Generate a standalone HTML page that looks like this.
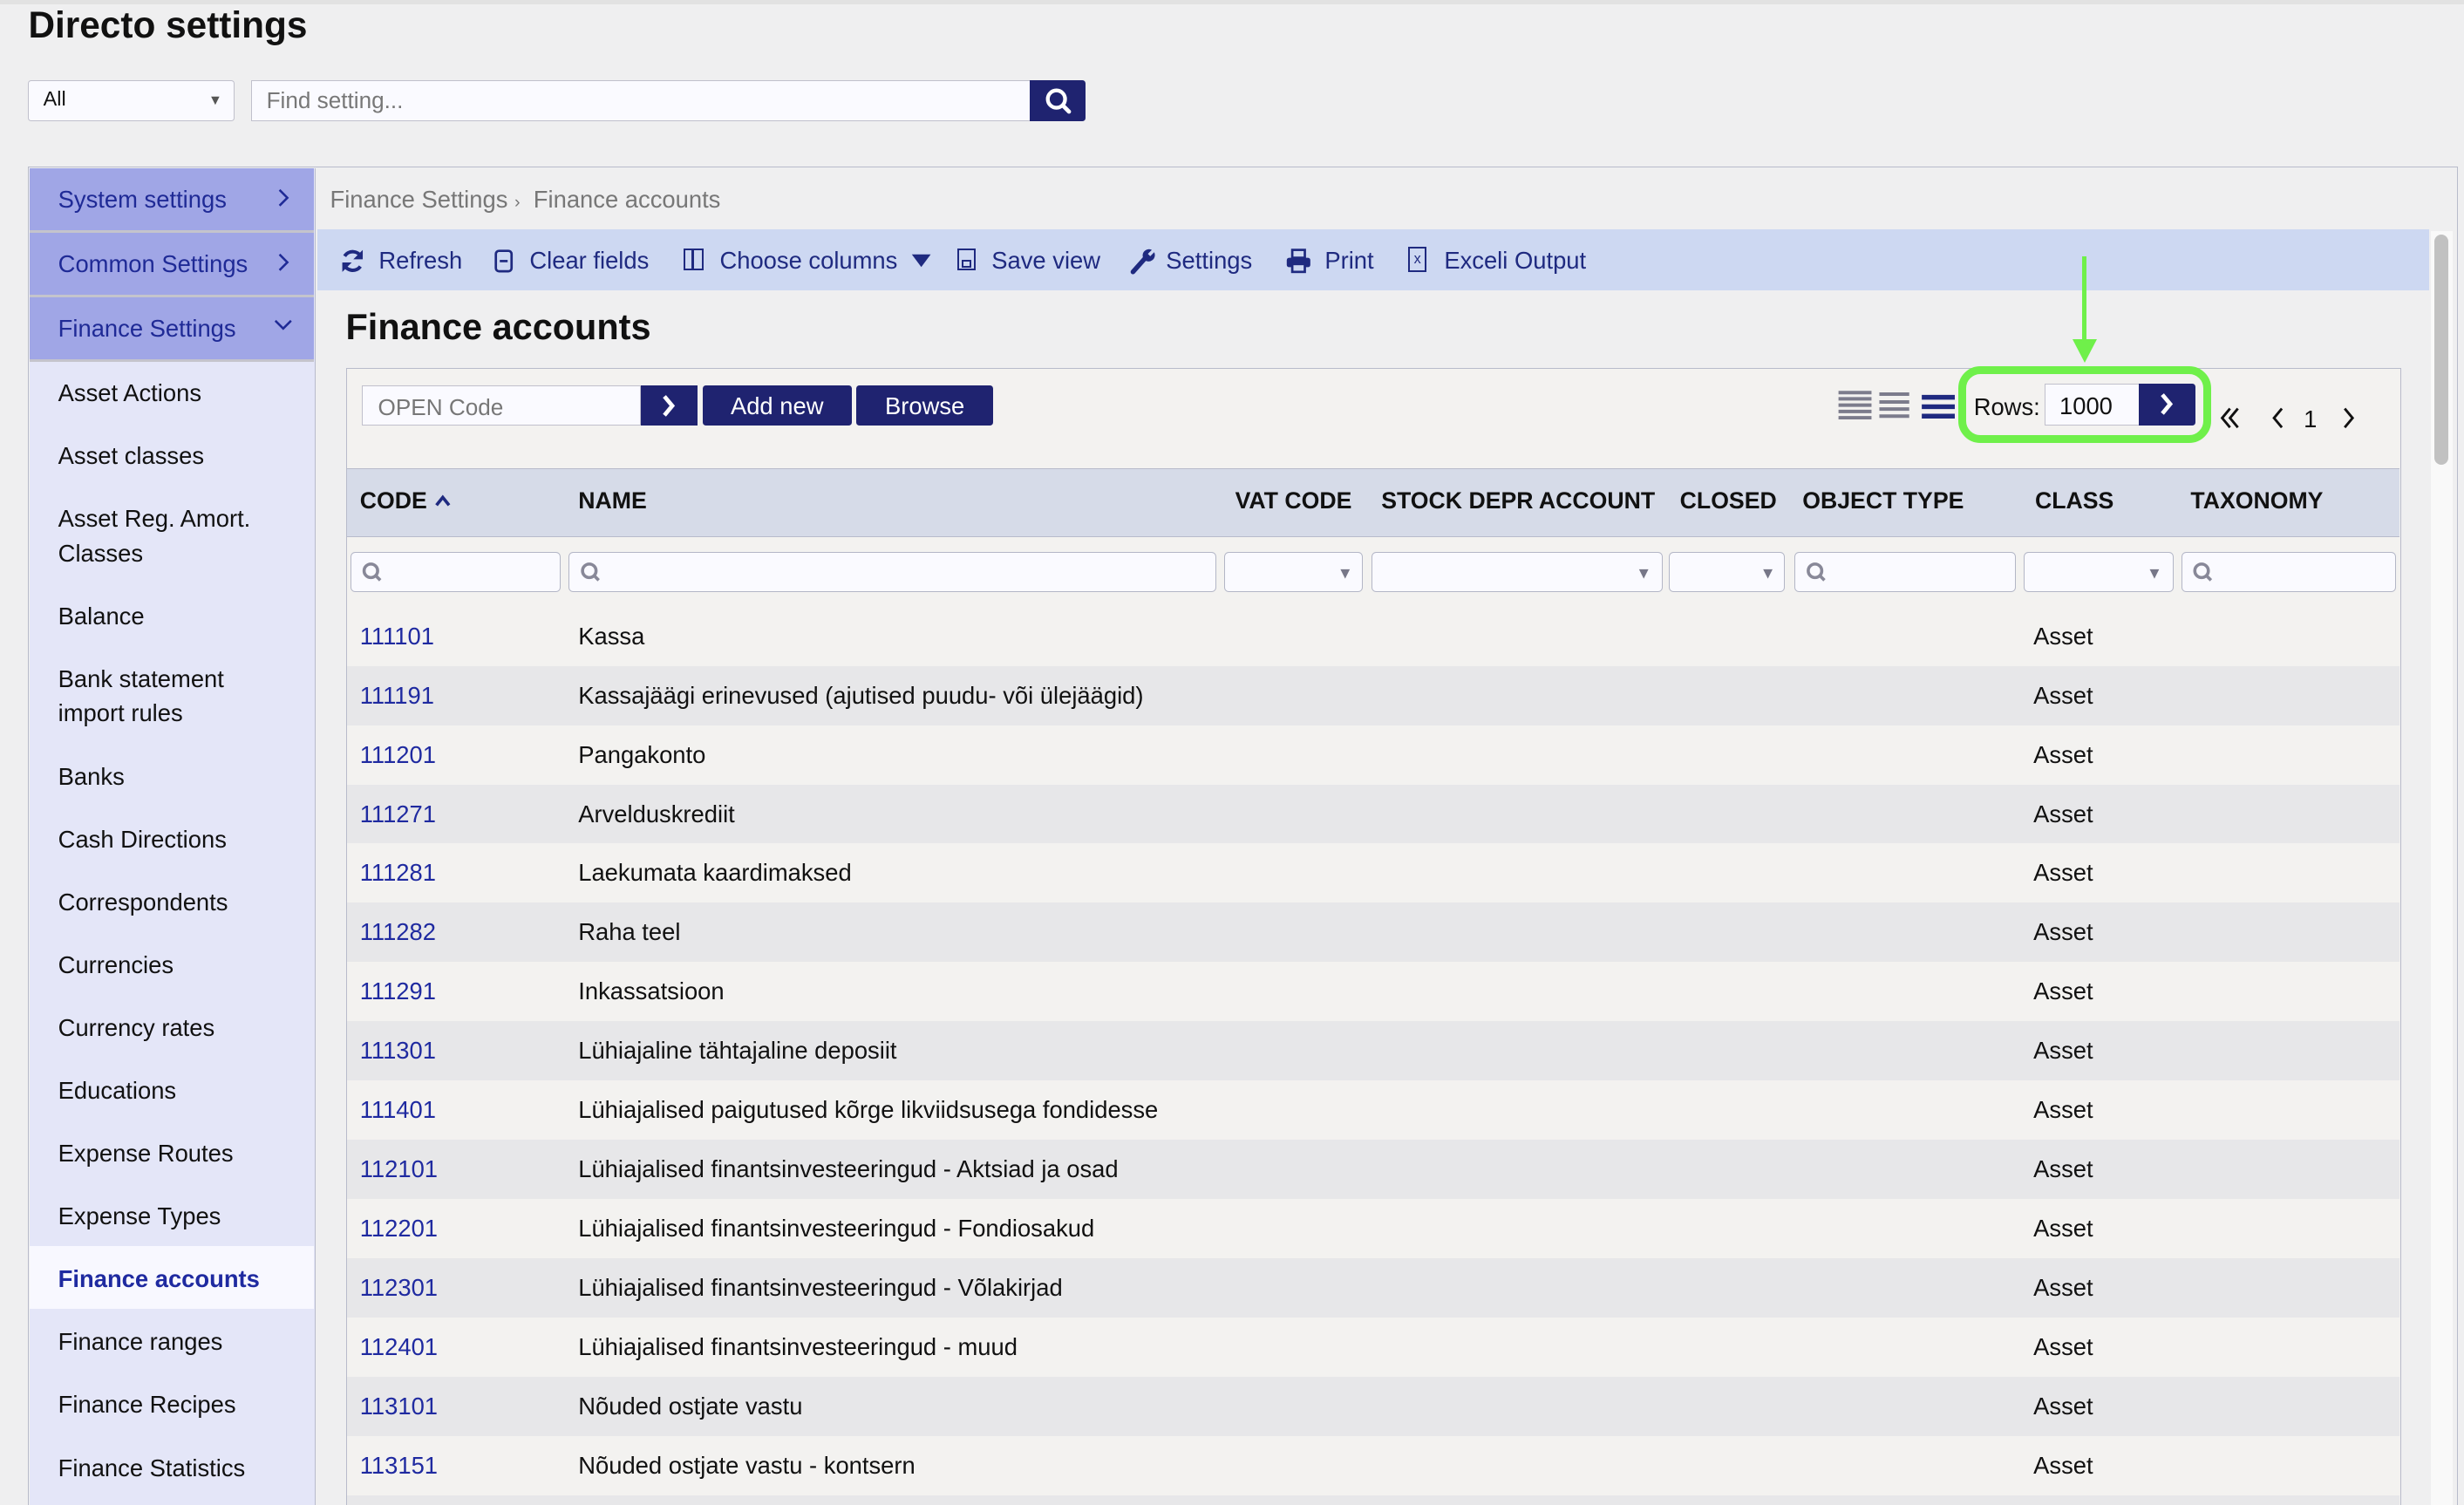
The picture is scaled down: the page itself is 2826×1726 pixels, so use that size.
<!DOCTYPE html>
<html><head><meta charset="utf-8"><style>
*{box-sizing:border-box;margin:0;padding:0}
html,body{width:2826px;height:1726px;overflow:hidden;background:#efeff0}
#w{zoom:1.80230;position:relative;width:1568px;height:958px;font-family:"Liberation Sans",sans-serif;font-size:15.2px;color:#111}
.a{position:absolute}
.nav{position:absolute;left:19px;width:181px;background:#a0a6e6;color:#1f2a96;border-bottom:2px solid #c4c4cc;padding-left:18px;height:41px;line-height:40px}
.nav svg{position:absolute;right:16px;top:13px}
.sub{position:absolute;left:19px;width:181px;color:#111;padding-left:18px;line-height:22px}
.tb{position:absolute;top:157px;color:#1f2a80}
.th{position:absolute;top:310px;font-weight:bold;font-size:14.8px}
.f{position:absolute;top:351px;height:26px;border:1px solid #b3b6c6;border-radius:3px;background:#fafaff}
.row{position:absolute;left:221px;width:1306px;height:37.7px}
.row .c{position:absolute;left:8px;top:10px;color:#1f2aa0}
.row .n{position:absolute;left:147px;top:10px}
.row .k{position:absolute;left:1073px;top:10px}
</style></head><body><div id="w">
<div class="a" style="left:0;top:0;width:1568px;height:3px;background:#e2e2e2"></div>
<div class="a" style="left:18px;top:3px;font-size:23.5px;font-weight:bold">Directo settings</div>
<div class="a" style="left:18px;top:51px;width:131px;height:26px;background:#fafaff;border:1px solid #c0c0cc;border-radius:2px;padding:4px 9px;font-size:13px">All<span style="position:absolute;right:7px;top:7px;font-size:9px;color:#555">▼</span></div>
<div class="a" style="left:160px;top:51px;width:496px;height:26px;background:#fafaff;border:1px solid #c0c0cc;padding:4px 9px;color:#777;font-size:14.5px">Find setting...</div>
<div class="a" style="left:655px;top:51px;width:36px;height:26px;background:#1f2370;border-radius:0 2px 2px 0"><svg width="36" height="26"><circle cx="17" cy="12" r="5.5" stroke="#fff" stroke-width="2.4" fill="none"/><path d="M21 16l4 4" stroke="#fff" stroke-width="2.6" stroke-linecap="round"/></svg></div>

<div class="a" style="left:18px;top:106px;width:1546px;height:860px;border:1px solid #b8bbcb;background:#efeff0"></div>
<div class="a" style="left:19px;top:107px;width:182px;height:860px;background:#e4e6f8;border-right:1px solid #b8bbcb"></div>
<div class="nav" style="top:107px">System settings<svg width="8" height="12"><path d="M2 1l5 5-5 5" stroke="#1f2a96" stroke-width="1.4" fill="none"/></svg></div>
<div class="nav" style="top:148px">Common Settings<svg width="8" height="12"><path d="M2 1l5 5-5 5" stroke="#1f2a96" stroke-width="1.4" fill="none"/></svg></div>
<div class="nav" style="top:189px">Finance Settings<svg width="12" height="8" style="right:14px;top:14px"><path d="M1 1l5 5 5-5" stroke="#1f2a96" stroke-width="1.4" fill="none"/></svg></div>
<div class="sub" style="top:239px">Asset Actions</div>
<div class="sub" style="top:279px">Asset classes</div>
<div class="sub" style="top:319px">Asset Reg. Amort.<br>Classes</div>
<div class="sub" style="top:381px">Balance</div>
<div class="sub" style="top:421px">Bank statement<br>import rules</div>
<div class="sub" style="top:483px">Banks</div>
<div class="sub" style="top:523px">Cash Directions</div>
<div class="sub" style="top:563px">Correspondents</div>
<div class="sub" style="top:603px">Currencies</div>
<div class="sub" style="top:643px">Currency rates</div>
<div class="sub" style="top:683px">Educations</div>
<div class="sub" style="top:723px">Expense Routes</div>
<div class="sub" style="top:763px">Expense Types</div>
<div class="a" style="left:19px;top:793px;width:181px;height:40px;background:#f8f8ff"></div>
<div class="sub" style="top:803px;color:#1f2aa0;font-weight:bold">Finance accounts</div>
<div class="sub" style="top:843px">Finance ranges</div>
<div class="sub" style="top:883px">Finance Recipes</div>
<div class="sub" style="top:923px">Finance Statistics</div>

<div class="a" style="left:210px;top:118px;color:#777">Finance Settings <span style="font-size:11px">›</span>&nbsp; Finance accounts</div>
<div class="a" style="left:202px;top:146px;width:1344px;height:39px;background:#cdd8f2"></div>
<svg class="a" style="left:216px;top:157px" width="18" height="18"><g stroke="#1f2a80" stroke-width="2.2" fill="none"><path d="M14 6.5A6 6 0 0 0 3.5 6"/><path d="M3 11a6 6 0 0 0 10.5 1.5"/></g><path d="M15 2v6h-6z" fill="#1f2a80"/><path d="M2 16v-6h6z" fill="#1f2a80"/></svg>
<div class="tb" style="left:241px">Refresh</div>
<svg class="a" style="left:314px;top:158px" width="14" height="16"><rect x="1.5" y="1.5" width="10" height="13" rx="2" stroke="#1f2a80" stroke-width="1.5" fill="none"/><path d="M4 8h5" stroke="#1f2a80" stroke-width="1.5"/></svg>
<div class="tb" style="left:337px">Clear fields</div>
<div class="a" style="left:435px;top:158px;width:13px;height:14px;border:1.5px solid #1f2a80"><div style="position:absolute;left:4px;top:0;width:1.5px;height:12px;background:#1f2a80"></div></div>
<div class="tb" style="left:458px">Choose columns</div>
<svg class="a" style="left:579px;top:161px" width="14" height="10"><path d="M1 1h12l-6 8z" fill="#1f2a80"/></svg>
<div class="a" style="left:609px;top:158px;width:12px;height:14px;border:1.5px solid #1f2a80"><div style="position:absolute;left:2px;top:6px;width:6px;height:5px;border:1.5px solid #1f2a80"></div></div><div class="tb" style="left:631px">Save view</div>
<svg class="a" style="left:718px;top:157px" width="18" height="18"><path d="M3 16L11 7" stroke="#1f2a80" stroke-width="3" stroke-linecap="round"/><path d="M10 8a4 4 0 0 1 5-6l-2.5 2.5 1.5 1.5 2.5-2.5a4 4 0 0 1-6 5" fill="#1f2a80"/></svg>
<div class="tb" style="left:742px">Settings</div>
<svg class="a" style="left:818px;top:157px" width="18" height="18"><rect x="4.5" y="2" width="8" height="5" stroke="#1f2a80" stroke-width="1.5" fill="none"/><rect x="1" y="7" width="15" height="6" rx="1.5" fill="#1f2a80"/><rect x="4.5" y="11" width="8" height="5" stroke="#1f2a80" stroke-width="1.5" fill="#cdd8f2"/></svg>
<div class="tb" style="left:843px">Print</div>
<div class="a" style="left:896px;top:157px;width:12px;height:16px;border:1.5px solid #1f2a80;font-size:9px;color:#1f2a80;text-align:center;line-height:14px">x</div><div class="tb" style="left:919px">Exceli Output</div>

<div class="a" style="left:220px;top:195px;font-size:23px;font-weight:bold">Finance accounts</div>
<div class="a" style="left:220px;top:234px;width:1308px;height:730px;border:1px solid #b8bbcb;background:#f3f2f0"></div>
<div class="a" style="left:230px;top:245px;width:178px;height:26px;background:#fafaff;border:1px solid #c0c0cc;padding:5px 10px;color:#777;font-size:14.5px">OPEN Code</div>
<div class="a" style="left:408px;top:245px;width:36px;height:26px;background:#1f2370"><svg width="36" height="26"><path d="M15 7l5 6-5 6" stroke="#fff" stroke-width="2.6" fill="none"/></svg></div>
<div class="a" style="left:447px;top:245px;width:95px;height:26px;background:#1f2370;color:#fff;text-align:center;line-height:27px;border-radius:2px">Add new</div>
<div class="a" style="left:545px;top:245px;width:87px;height:26px;background:#1f2370;color:#fff;text-align:center;line-height:27px;border-radius:2px">Browse</div>
<svg class="a" style="left:1168px;top:246px" width="80" height="24"><g stroke="#7c7c8c" stroke-width="2.2"><path d="M2 4h21M2 8h21M2 12h21M2 16h21M2 20h21"/><path d="M28 5h19M28 10h19M28 14.5h19M28 19h19"/></g><g stroke="#1f2a80" stroke-width="3"><path d="M55 7h21M55 13h21M55 19h21"/></g></svg>
<div class="a" style="left:1256px;top:250px">Rows:</div>
<div class="a" style="left:1301px;top:244px;width:61px;height:27px;background:#fafaff;border:1px solid #c0c0cc;padding:5px 9px">1000</div>
<div class="a" style="left:1361px;top:244px;width:36px;height:27px;background:#1f2370;border-radius:0 2px 2px 0"><svg width="36" height="27"><path d="M15 7l5 6-5 6" stroke="#fff" stroke-width="2.6" fill="none"/></svg></div>
<div class="a" style="left:1246px;top:233px;width:161px;height:49px;border:5px solid #6ff04a;border-radius:14px"></div>
<div class="a" style="left:1325px;top:163px;width:3px;height:55px;background:#6ff04a"></div>
<div class="a" style="left:1319px;top:216px;width:0;height:0;border-left:8px solid transparent;border-right:8px solid transparent;border-top:15px solid #6ff04a"></div>
<svg class="a" style="left:1412px;top:258px" width="90" height="16"><g stroke="#111" stroke-width="1.6" fill="none"><path d="M7 2l-5 6 5 6M12 2l-5 6 5 6"/><path d="M40 2l-5 6 5 6"/><path d="M80 2l5 6-5 6"/></g></svg>
<div class="a" style="left:1466px;top:258px">1</div>

<div class="a" style="left:221px;top:298px;width:1306px;height:44px;background:#d6dbe8;border-top:1px solid #b8bbcb;border-bottom:1px solid #b8bbcb"></div>
<div class="th" style="left:229px">CODE <svg width="12" height="10"><path d="M2 8l4-5 4 5" stroke="#1f2a80" stroke-width="2" fill="none"/></svg></div>
<div class="th" style="left:368px">NAME</div>
<div class="th" style="left:786px">VAT CODE</div>
<div class="th" style="left:879px">STOCK DEPR ACCOUNT</div>
<div class="th" style="left:1069px">CLOSED</div>
<div class="th" style="left:1147px">OBJECT TYPE</div>
<div class="th" style="left:1295px">CLASS</div>
<div class="th" style="left:1394px">TAXONOMY</div>

<div class="f" style="left:223px;width:134px"></div>
<div class="f" style="left:362px;width:412px"></div>
<div class="f" style="left:779px;width:88px"></div>
<div class="f" style="left:873px;width:185px"></div>
<div class="f" style="left:1062px;width:74px"></div>
<div class="f" style="left:1142px;width:141px"></div>
<div class="f" style="left:1288px;width:95px"></div>
<div class="f" style="left:1388px;width:137px"></div>
<svg class="a" style="left:0;top:351px" width="1568" height="26"><g stroke="#888898" stroke-width="2" fill="none"><circle cx="236" cy="12" r="4.3"/><path d="M239 15l3 3"/><circle cx="375" cy="12" r="4.3"/><path d="M378 15l3 3"/><circle cx="1155" cy="12" r="4.3"/><path d="M1158 15l3 3"/><circle cx="1401" cy="12" r="4.3"/><path d="M1404 15l3 3"/></g><g fill="#777788"><path d="M853 11h6l-3 6z"/><path d="M1043 11h6l-3 6z"/><path d="M1122 11h6l-3 6z"/><path d="M1368 11h6l-3 6z"/></g></svg>

<div class="row" style="top:386px;background:#f3f2f0"><span class="c">111101</span><span class="n">Kassa</span><span class="k">Asset</span></div>
<div class="row" style="top:423.7px;background:#e7e7e9"><span class="c">111191</span><span class="n">Kassajäägi erinevused (ajutised puudu- või ülejäägid)</span><span class="k">Asset</span></div>
<div class="row" style="top:461.4px;background:#f3f2f0"><span class="c">111201</span><span class="n">Pangakonto</span><span class="k">Asset</span></div>
<div class="row" style="top:499.1px;background:#e7e7e9"><span class="c">111271</span><span class="n">Arvelduskrediit</span><span class="k">Asset</span></div>
<div class="row" style="top:536.8px;background:#f3f2f0"><span class="c">111281</span><span class="n">Laekumata kaardimaksed</span><span class="k">Asset</span></div>
<div class="row" style="top:574.5px;background:#e7e7e9"><span class="c">111282</span><span class="n">Raha teel</span><span class="k">Asset</span></div>
<div class="row" style="top:612.2px;background:#f3f2f0"><span class="c">111291</span><span class="n">Inkassatsioon</span><span class="k">Asset</span></div>
<div class="row" style="top:649.9px;background:#e7e7e9"><span class="c">111301</span><span class="n">Lühiajaline tähtajaline deposiit</span><span class="k">Asset</span></div>
<div class="row" style="top:687.6px;background:#f3f2f0"><span class="c">111401</span><span class="n">Lühiajalised paigutused kõrge likviidsusega fondidesse</span><span class="k">Asset</span></div>
<div class="row" style="top:725.3px;background:#e7e7e9"><span class="c">112101</span><span class="n">Lühiajalised finantsinvesteeringud - Aktsiad ja osad</span><span class="k">Asset</span></div>
<div class="row" style="top:763px;background:#f3f2f0"><span class="c">112201</span><span class="n">Lühiajalised finantsinvesteeringud - Fondiosakud</span><span class="k">Asset</span></div>
<div class="row" style="top:800.7px;background:#e7e7e9"><span class="c">112301</span><span class="n">Lühiajalised finantsinvesteeringud - Võlakirjad</span><span class="k">Asset</span></div>
<div class="row" style="top:838.4px;background:#f3f2f0"><span class="c">112401</span><span class="n">Lühiajalised finantsinvesteeringud - muud</span><span class="k">Asset</span></div>
<div class="row" style="top:876.1px;background:#e7e7e9"><span class="c">113101</span><span class="n">Nõuded ostjate vastu</span><span class="k">Asset</span></div>
<div class="row" style="top:913.8px;background:#f3f2f0"><span class="c">113151</span><span class="n">Nõuded ostjate vastu - kontsern</span><span class="k">Asset</span></div>
<div class="row" style="top:951.5px;background:#e7e7e9"></div>

<div class="a" style="left:1547px;top:147px;width:14px;height:820px;background:#f9f9f9"></div>
<div class="a" style="left:1549px;top:149px;width:9px;height:147px;background:#c1c1c1;border-radius:5px"></div>
</div></body></html>
